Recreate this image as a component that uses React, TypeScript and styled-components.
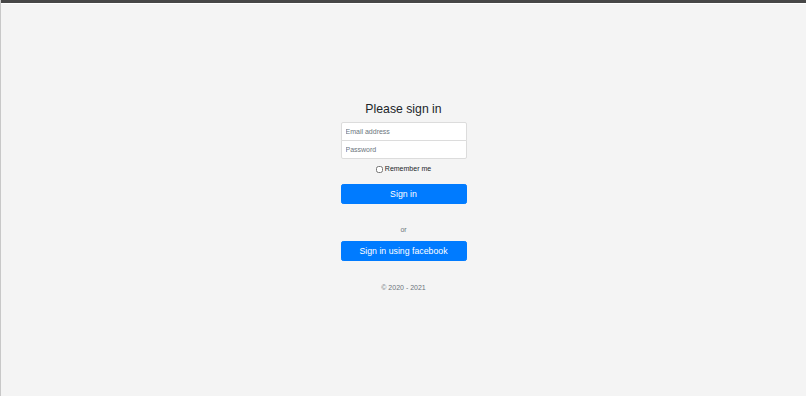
import React from "react";
import styled, { createGlobalStyle } from "styled-components";

const GlobalStyle = createGlobalStyle`
  html, body { margin: 0; padding: 0; }
  body {
    background: #f4f4f4;
    font-family: "Liberation Sans", Arial, sans-serif;
    color: #212529;
  }
  * { box-sizing: border-box; }
`;

const Frame = styled.div`
  width: 806px;
  height: 396px;
  border-left: 1px solid #c8c8c8;
  display: flex;
  flex-direction: column;
  overflow: hidden;
`;

const TopBar = styled.div`
  height: 4px;
  background: #474747;
  border-bottom: 1px solid #ffffff;
  flex-shrink: 0;
`;

const Page = styled.main`
  flex: 1;
  display: flex;
  flex-direction: column;
  align-items: center;
  padding-top: 98px;
`;

const Form = styled.form`
  width: 126px;
  display: flex;
  flex-direction: column;
  align-items: stretch;
  text-align: center;
`;

const Heading = styled.h1`
  margin: 0 0 5.5px;
  font-size: 12.25px;
  line-height: 1.2;
  font-weight: 400;
  color: #212529;
`;

const Input = styled.input<{ $pos: "top" | "bottom" }>`
  display: block;
  width: 100%;
  height: 19px;
  padding: 0 4px;
  font-family: "Liberation Sans", Arial, sans-serif;
  font-size: 7px;
  color: #495057;
  background: #fff;
  border: 1px solid #dcdcdc;
  border-radius: ${(p) => (p.$pos === "top" ? "2px 2px 0 0" : "0 0 2px 2px")};
  margin-top: ${(p) => (p.$pos === "bottom" ? "-1px" : "0")};
  outline: none;
  &::placeholder { color: #6c757d; }
`;

const CheckRow = styled.label`
  display: flex;
  justify-content: center;
  align-items: center;
  gap: 2px;
  margin: 5px 0 9.5px;
  font-size: 7px;
  line-height: 10.5px;
  color: #212529;
`;

const Check = styled.input`
  width: 7px;
  height: 7px;
  margin: 0;
`;

const Button = styled.button`
  display: flex;
  align-items: center;
  justify-content: center;
  width: 100%;
  height: 20px;
  border: 1px solid #007bff;
  border-radius: 2.2px;
  background: #007bff;
  color: #fff;
  font-family: "Liberation Sans", Arial, sans-serif;
  font-size: 8.75px;
  line-height: 1;
  padding: 1px 0 0;
  cursor: pointer;
`;

const Muted = styled.p<{ $mt: number; $mb?: number }>`
  margin: ${(p) => p.$mt}px 0 ${(p) => p.$mb ?? 0}px;
  font-size: 7px;
  line-height: 10.5px;
  color: #6c757d;
`;

export default function App() {
  return (
    <>
      <GlobalStyle />
      <Frame>
        <TopBar />
        <Page>
          <Form onSubmit={(e) => e.preventDefault()}>
            <Heading>Please sign in</Heading>
            <Input $pos="top" type="email" placeholder="Email address" />
            <Input $pos="bottom" type="password" placeholder="Password" />
            <CheckRow>
              <Check type="checkbox" />
              Remember me
            </CheckRow>
            <Button type="submit">Sign in</Button>
            <Muted $mt={21} $mb={5}>or</Muted>
            <Button type="button">Sign in using facebook</Button>
            <Muted $mt={22}>© 2020 - 2021</Muted>
          </Form>
        </Page>
      </Frame>
    </>
  );
}
